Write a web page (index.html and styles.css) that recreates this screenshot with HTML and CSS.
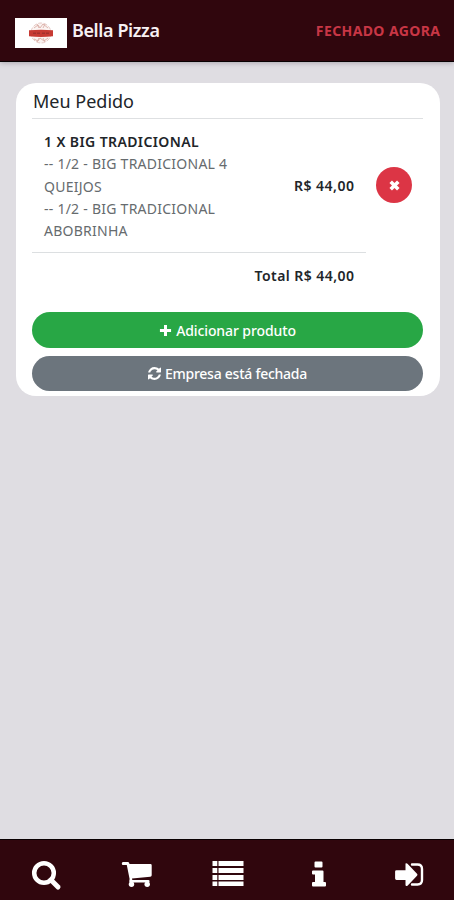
FILE: index.html
```html
<!DOCTYPE html>
<html lang="pt-BR">
<head>
<meta charset="utf-8">
<title>Bella Pizza</title>
<link rel="stylesheet" href="styles.css">
</head>
<body>
<header class="topbar">
  <div class="brand">
    <svg class="logo" viewBox="0 0 52 30" aria-hidden="true">
      <rect width="52" height="30" fill="#fff"/>
      <circle cx="26" cy="15" r="10" fill="#fbf3f1" stroke="#dfbdb7" stroke-width=".8" stroke-dasharray="4 1.500"/>
      <path d="M19 10l4-3 2 3 3-4 5 4M19 21l4 2 2-3 4 3 4-3M22 6l2 4M30 6l-2 4M22 24l2-4M30 24l-2-4" fill="none" stroke="#d9aea6" stroke-width=".9"/>
      <path d="M14 12.300q12-1 24 0v6q-12 1.300-24 0z" fill="#c73a33"/>
      <path d="M18 15.300h3m1 0h3m2 0h3m1 0h3" stroke="#a3302d" stroke-width="1.600"/>
    </svg>
    <span class="name">Bella Pizza</span>
  </div>
  <span class="status">FECHADO AGORA</span>
</header>
<main>
  <section class="card">
    <h1>Meu Pedido</h1>
    <div class="order">
      <div class="item">
        <div class="details">
          <strong>1 X BIG TRADICIONAL</strong>
          <span>-- 1/2 - BIG TRADICIONAL 4</span>
          <span>QUEIJOS</span>
          <span>-- 1/2 - BIG TRADICIONAL</span>
          <span>ABOBRINHA</span>
        </div>
        <span class="price">R$ 44,00</span>
      </div>
      <button class="remove" aria-label="Remover"><svg viewBox="0 0 12 12"><path d="M2.500 2.500l7 7m0-7l-7 7" stroke="#fff" stroke-width="3.300"/></svg></button>
    </div>
    <div class="total">Total R$ 44,00</div>
    <button class="action add"><svg viewBox="0 0 14 14"><path d="M7 1v12M1 7h12" stroke="#fff" stroke-width="3.200"/></svg><span>Adicionar produto</span></button>
    <button class="action closed"><svg viewBox="128 128 1536 1536"><path fill="#fff" d="M1639 1056q0 5-1 7-64 268-268 434.500t-478 166.500q-146 0-282.500-55t-243.500-157l-129 129q-19 19-45 19t-45-19-19-45v-448q0-26 19-45t45-19h448q26 0 45 19t19 45-19 45l-137 137q71 66 161 102t187 36q134 0 250-65t186-179q11-17 53-117 8-23 30-23h192q13 0 22.500 9.500t9.500 22.500zm25-800v448q0 26-19 45t-45 19h-448q-26 0-45-19t-19-45 19-45l138-138q-148-137-349-137-134 0-250 65t-186 179q-11 17-53 117-8 23-30 23h-199q-13 0-22.500-9.500t-9.500-22.500v-7q65-268 270-434.500t480-166.500q146 0 284 55.500t245 156.500l130-129q19-19 45-19t45 19 19 45z"/></svg><span>Empresa está fechada</span></button>
  </section>
</main>
<nav class="tabs">
  <svg viewBox="0 0 32 32"><circle cx="14" cy="14" r="9.800" fill="none" stroke="#fff" stroke-width="4.500"/><path d="M21 21l7 7" stroke="#fff" stroke-width="5" stroke-linecap="round"/></svg>
  <svg viewBox="0 0 32 32"><path fill="#fff" d="M2 3h5q1.200 0 1.500 2H29.500q1.200 0 1.200 1.200v10q0 1.300-1.400 1.500L11 19.600l.3 1.400h16q1.300 0 1.300 1.200T27.300 23.500H9.500q-1.300 0-1.300-1.200l.4-2.300L5.800 6H2Q.8 6 .8 4.500T2 3z"/><circle cx="10.500" cy="25.200" r="2.700" fill="#fff"/><circle cx="26.200" cy="25.200" r="2.700" fill="#fff"/></svg>
  <svg viewBox="0 0 32 32"><path fill="#fff" d="M.5 2h4.800v5H.5zm6 0h25v5h-25zM.5 9h4.800v5H.5zm6 0h25v5h-25zM.5 16h4.800v5H.5zm6 0h25v5h-25zM.5 22.500h4.800V27H.5zm6 0h25V27h-25z"/></svg>
  <svg viewBox="0 0 32 32"><path fill="#fff" d="M12.500 2.500h6q1 0 1 1v4q0 1-1 1h-6q-1 0-1-1v-4q0-1 1-1zM10 11.500h9.500q1 0 1 1v10.500H22q1 0 1 1v2.500q0 1-1 1H10q-1 0-1-1V24q0-1 1-1h2v-7.500h-2q-1 0-1-1v-2q0-1 1-1z"/></svg>
  <svg viewBox="0 0 32 32"><path fill="#fff" d="M11.500 4.500q1-.8 2 .2l9.500 10q1 1 0 2l-9.500 10q-2 1-2-1V21H2.500q-1.400 0-1.400-1.400v-7q0-1.400 1.400-1.400h9z"/><path d="M18 5.500h5.500q4.500 0 4.500 4.500v11q0 4.500-4.500 4.500H18" fill="none" stroke="#fff" stroke-width="2.400" stroke-linecap="round"/></svg>
</nav>
</body>
</html>
```
FILE: styles.css
```css
* { box-sizing: border-box; }
body {
  margin: 0;
  height: 900px;
  display: flex;
  flex-direction: column;
  background: #dfdde2;
  color: #212529;
  font-family: "Noto Sans", "Open Sans", sans-serif;
  overflow: hidden;
}
.topbar {
  height: 62px;
  flex: none;
  display: flex;
  justify-content: space-between;
  align-items: center;
  padding: 0 14px 0 15px;
  background: #30060d;
  border-bottom: 1px solid #090002;
  box-shadow: 0 1px 5px #aaa6ae;
}
.brand { display: flex; align-items: center; gap: 5px; }
.logo { width: 52px; height: 30px; margin-top: 4px; }
.name { margin-top: -2px; color: #f7f0f3; font-size: 18px; font-weight: 600; letter-spacing: -.4px; white-space: nowrap; }
.status { color: #c83645; font-size: 14px; font-weight: 700; letter-spacing: .4px; margin-right: -.4px; white-space: nowrap; }
main { flex: 1; padding: 21px 14px 0 16px; }
.card { height: 313px; padding: 5px 17px 0 16px; background: #fff; border-radius: 20px; }
h1 { height: 31px; margin: 0; border-bottom: 1px solid #dee0e2; font-size: 18px; line-height: 27px; font-weight: 400; padding-left: 1px; }
.order { height: 134px; display: flex; }
.item { width: 334px; padding: 12px 12px 0; display: flex; justify-content: space-between; border-bottom: 1px solid #dcdfe1; }
.details { display: flex; flex-direction: column; font-size: 14px; line-height: 22.300px; letter-spacing: .25px; color: #666b6e; white-space: nowrap; }
.details strong { color: #212529; font-weight: 600; letter-spacing: .4px; }
.price { align-self: flex-start; margin-top: 44px; font-size: 14px; line-height: 22px; font-weight: 600; letter-spacing: .5px; margin-right: -.5px; white-space: nowrap; }
.remove { width: 36px; height: 36px; margin: 48px 0 0 10px; padding: 0; display: grid; place-items: center; border: 0; border-radius: 50%; background: #dc3545; }
.remove svg { width: 13px; height: 13px; }
.total { width: 334px; height: 59px; padding: 12px 11.500px 0 0; text-align: right; font-size: 14px; line-height: 22px; font-weight: 600; letter-spacing: .45px; }
.action { width: 391px; height: 36px; padding: 0; display: flex; align-items: center; justify-content: center; gap: 4px; border: 0; border-radius: 18px; color: #fff; font: 500 14px "Noto Sans", sans-serif; letter-spacing: -.1px; white-space: nowrap; }
.add { background: #28a745; }
.closed { height: 35px; margin-top: 8px; background: #6c757d; letter-spacing: -.25px; }
.action svg { width: 13px; height: 13px; }
.tabs { height: 61px; flex: none; display: flex; justify-content: space-between; align-items: center; padding: 10px 28px 0 30px; background: #30060d; border-top: 1px solid #090002; }
.tabs svg { width: 32px; height: 32px; }
```
